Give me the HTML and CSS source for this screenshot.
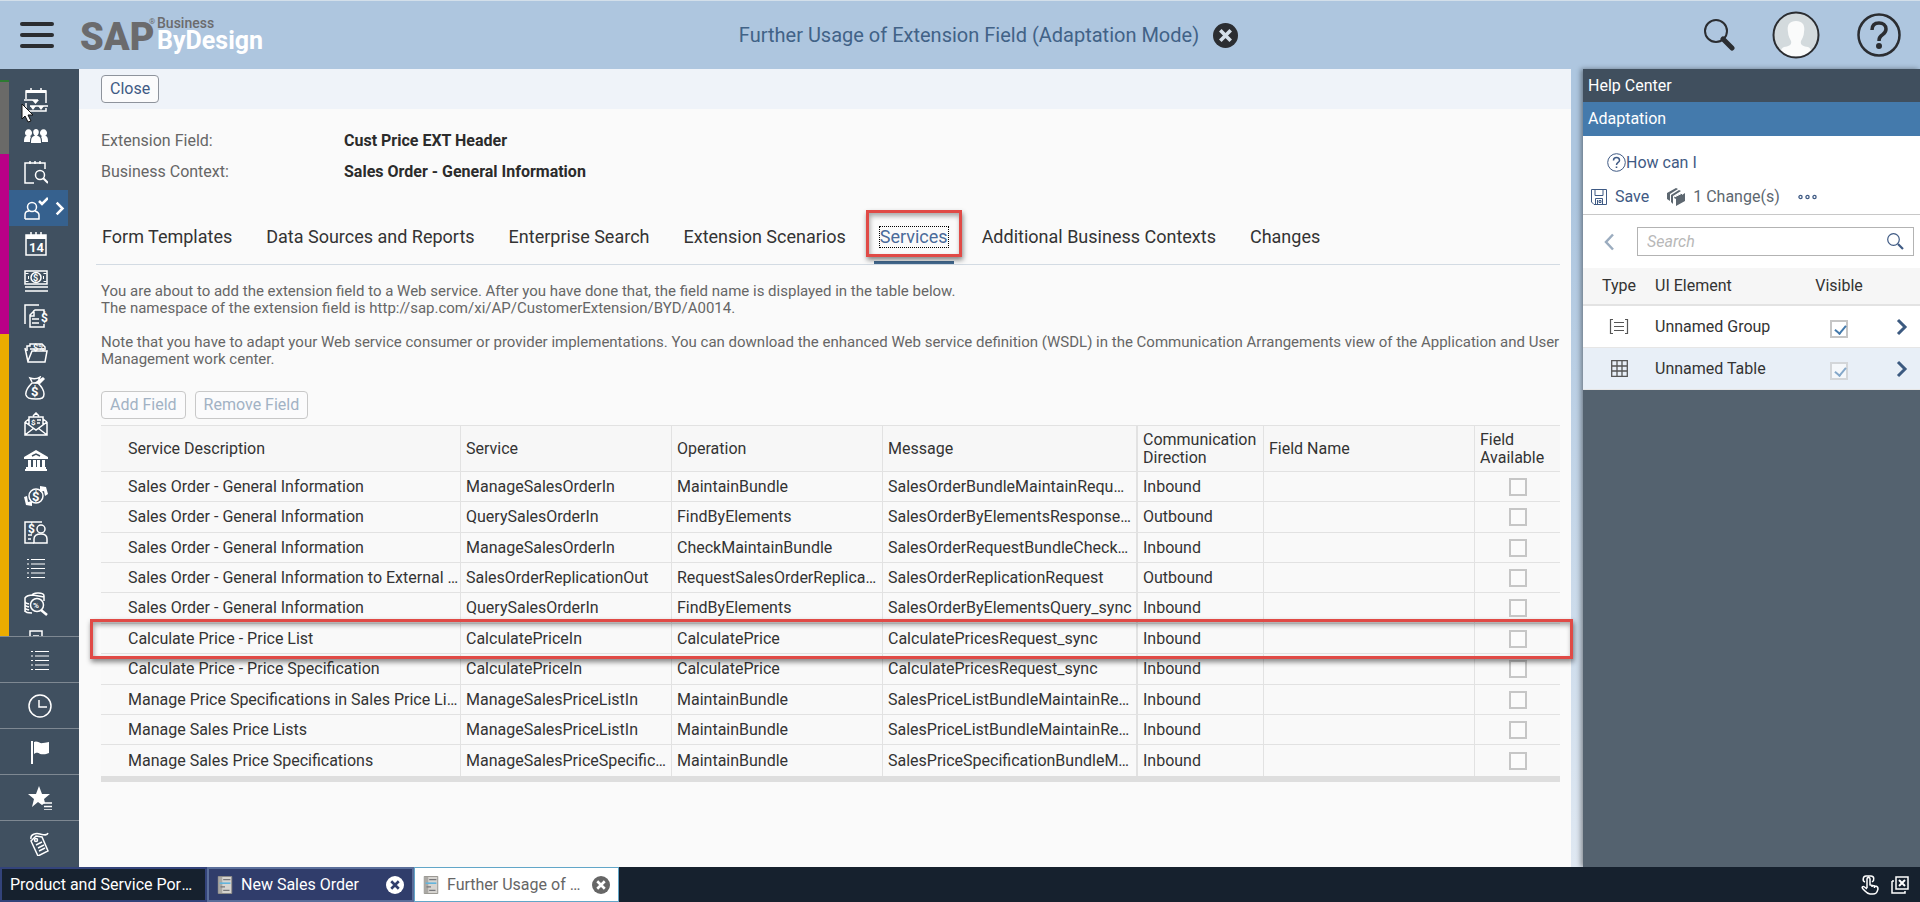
FILE: index.html
```html
<!DOCTYPE html>
<html lang="en">
<head>
<meta charset="utf-8">
<meta name="viewport" content="width=device-width, initial-scale=1">
<title>SAP Business ByDesign</title>
<link rel="stylesheet" href="styles.css">
</head>
<body>
<svg class="defs" aria-hidden="true">
  <symbol id="chevron" viewBox="0 0 12 18"><path d="M2 2l7 7-7 7" fill="none" stroke="currentColor" stroke-width="3"/></symbol>
  <symbol id="list" viewBox="0 0 24 24"><path d="M7 3.500h14M7 8h14M7 12.500h14M7 17h14M7 21.500h14M3 3.500h2M3 8h2M3 12.500h2M3 17h2M3 21.500h2" stroke="currentColor" stroke-width="1.200"/></symbol>
  <symbol id="close" viewBox="0 0 24 24"><circle cx="12" cy="12" r="12" fill="currentColor"/><path d="M7 7l10 10M17 7L7 17" stroke="var(--cross)" stroke-width="3.500"/></symbol>
  <symbol id="sheet" viewBox="0 0 16 20"><path d="M.5.500h15v19H.500z" fill="#d6d4d0" stroke="#8d8b86"/><path d="M1 1h4v18H1z" fill="#aaa8a4"/><path d="M6 4h8M3 12h5M6 16h7" stroke="#77777b" stroke-width="1.500"/><path d="M2 8h12" stroke="#62b4dc" stroke-width="1.800"/></symbol>
</svg>
<div class="app">
  <header class="shell">
    <button class="menu" aria-label="Menu"><span></span><span></span><span></span></button>
    <svg class="logo" width="190" height="50" viewBox="0 0 190 50" role="img" aria-label="SAP Business ByDesign">
      <text class="logo-sap" x="0" y="40">SAP</text>
      <text class="logo-reg" x="69" y="14">®</text>
      <text class="logo-business" x="77" y="18">Business</text>
      <text class="logo-bydesign" x="77" y="39">ByDesign</text>
    </svg>
    <div class="shell-title">
      <h1>Further Usage of Extension Field (Adaptation Mode)</h1>
      <button class="title-close" aria-label="Close page"><svg width="25" height="25"><use href="#close"/></svg></button>
    </div>
    <div class="shell-actions">
      <button aria-label="Search"><svg width="32" height="32" viewBox="0 0 32 32" fill="none" stroke="#2b2d31"><circle cx="13" cy="12" r="11" stroke-width="2"/><path d="M20 20l9 9" stroke-width="5" stroke-linecap="round"/></svg></button>
      <button aria-label="User profile"><svg width="48" height="48" viewBox="0 0 48 48"><circle cx="24" cy="24" r="22.500" fill="#d3dadd"/><path d="M16 21c-1-5 0-11 8-11s9 6 8 11c0 4-2 7-3 9-1 4 2 5 7 6 2 1 3 2 3 4a23 23 0 0 1-30 0c0-2 1-3 3-4 5-1 8-2 7-6-1-2-3-5-3-9z" fill="#fafbfb"/><circle cx="24" cy="24" r="22.500" fill="none" stroke="#2b2d31" stroke-width="2"/></svg></button>
      <button aria-label="Help"><svg width="44" height="44" viewBox="0 0 44 44" fill="none" stroke="#2b2d31"><circle cx="22" cy="22" r="20.500" stroke-width="2.500"/><path d="M15 17c0-5 3-7 7-7s7 2 7 6-3 5-5 7c-2 1.500-2 3-2 5" stroke-width="3.500"/><circle cx="22" cy="33" r="1.500" stroke-width="3"/></svg></button>
    </div>
  </header>

  <nav class="rail" aria-label="Work centers">
    <div class="rail-main">
      <div class="rail-colors"><i class="c-green"></i><i class="c-grey"></i><i class="c-magenta"></i><i class="c-yellow"></i></div>
      <div class="rail-items">
        <button aria-label="Calendar planning"><svg viewBox="0 0 24 24"><path d="M2 11V3h20v12M2 15v8h20v-3M7 0v4M17 0v4"/><path d="M0 12h14M6 18h18"/><path class="f" d="M8 12h7l-3.500 4zM6 18h6l-3 4zM14 18h6l-3 4zM2 2h20v3H2z"/></svg></button>
        <button aria-label="People"><svg viewBox="0 0 24 24"><path class="f" d="M0 18c0-5 1-6 3-6a3.500 3.500 0 1 1 3 0l1 1c-1 1-1 3-1 5zM24 18c0-5-1-6-3-6a3.500 3.500 0 1 0-3 0l-1 1c1 1 1 3 1 5zM7 19c0-5 1-7 4-7-3-3-2-7 1-7s4 4 1 7c3 0 4 2 4 7z"/></svg></button>
        <button aria-label="Calendar search"><svg viewBox="0 0 24 24"><path d="M10 23H1V3h20v6M6 1v3M11 1v3M16 1v3"/><circle cx="16" cy="15" r="4.500"/><path d="M19 18l5 5" stroke-width="2"/></svg></button>
        <button class="active" aria-label="Customer" aria-current="page"><svg viewBox="0 0 24 24"><circle cx="8" cy="11" r="4.500"/><path d="M1 23v-4c0-3 2-4 4-4M11 15c3 1 4 2 4 4v4H1"/><path d="M15 5l3 3 6-6" stroke-width="2.500"/></svg><svg class="rail-chevron" width="10" height="17"><use href="#chevron"/></svg></button>
        <button aria-label="Calendar"><svg viewBox="0 0 24 24"><path d="M2 3h20v20H2zM7 0v5M12 0v5M17 0v5"/><path class="f" d="M2 3h20v4H2z"/><text x="5" y="20" font-size="13">14</text></svg></button>
        <button aria-label="Cash"><svg viewBox="0 0 24 24"><path d="M1 3h22v13H1zM1 19h23M1 23h23"/><circle cx="12" cy="9.500" r="5"/><path d="M3 5v1M21 5v1M3 13v1M21 13v1M4 9.500h1M19 9.500h1" stroke-width="3"/><text x="9" y="13" font-size="9">$</text></svg></button>
        <button aria-label="Invoices"><svg viewBox="0 0 24 24"><path d="M1 20V1h14M20 10V6h-9l-5 5v12h14v-3M10 6v6H6M8 15h7M8 19h7"/><text x="17" y="18" font-size="12">$</text></svg></button>
        <button aria-label="Folder"><svg viewBox="0 0 24 24"><path d="M3 11V6h3v-2h12l3 3v3M1 8l3 14h17l2-11H8l-4 10M6 9h14"/><text x="9" y="11" font-size="9">$%</text></svg></button>
        <button aria-label="Money bag"><svg viewBox="0 0 24 24"><path d="M8 6L6 2c3 1 7 1 10-1l-2 5M8 7c-4 4-7 8-6 12 1 3 3 4 10 4 6 0 8-1 8-5s-3-8-6-11z"/><path class="f" d="M13 5l6-4 2 2-5 5-6-1z"/><text x="7" y="20" font-size="13">$</text></svg></button>
        <button aria-label="Mail"><svg viewBox="0 0 24 24"><path d="M1 10v13h22V10M1 10l4-3M23 10l-4-3M5 13V5h14v8M1 10l11 8 11-8M1 23l9-7M23 23l-9-7M9 4l3-3 3 3"/><text x="7" y="13" font-size="8">$</text><path d="M13 8h4M13 11h3"/></svg></button>
        <button aria-label="Bank"><svg viewBox="0 0 24 24"><path class="f" d="M12 2l12 7v2H0V9zM2 19h20v2H2zM1 21h22v2H1zM4 12h3v7H4zM9 12h3v7H9zM13 12h3v7h-3zM18 12h3v7h-3z"/><path d="M8 8l4-2 4 2" stroke="#405060"/></svg></button>
        <button aria-label="Currency exchange"><svg viewBox="0 0 24 24"><circle cx="12" cy="12" r="7"/><text x="8" y="17" font-size="13">$</text><path class="f" d="M16 2l6 1 2 7-3 2-1-5-4 1zM8 22l-6-1-2-8 3-1 1 6 4-1z"/></svg></button>
        <button aria-label="Account"><svg viewBox="0 0 24 24"><path d="M10 23H1V2h17M4 15h4M4 19h3"/><text x="4" y="13" font-size="12">$</text><circle cx="17" cy="9" r="4"/><path d="M10 23v-4c0-4 3-5 7-5s6 2 6 5v4z"/></svg></button>
        <button aria-label="Lists"><svg viewBox="0 0 24 24"><use href="#list"/></svg></button>
        <button aria-label="Audit"><svg viewBox="0 0 24 24"><path d="M8 4c0-4 12-4 12 0v5M1 9V6c2-3 8-3 8-3l11 2M1 9c0 3 2 2 4 3M1 12c0 3 2 2 4 3M1 15c0 3 2 2 4 3M1 18c0 3 3 3 7 3M1 9v11"/><circle cx="13" cy="13" r="6.500"/><path d="M17 18l6 5" stroke-width="2.500"/><text x="9" y="16" font-size="8">%</text></svg></button>
        <button aria-label="More"><svg viewBox="0 0 24 24"><path d="M6 3h12v18H6zM9 8h6"/></svg></button>
      </div>
    </div>
    <div class="rail-tools">
      <button aria-label="List"><svg viewBox="0 0 24 24"><use href="#list"/></svg></button>
      <button aria-label="Recent"><svg viewBox="0 0 24 24"><circle cx="12" cy="12" r="11"/><path d="M11 6v7h8"/></svg></button>
      <button aria-label="Flag"><svg viewBox="0 0 24 24"><path d="M4 1v23" stroke-width="2"/><path class="f" d="M6 2c3-2 6 2 9 1 3 0 4-1 6-1v11c-4 2-7 1-9 1-3-2-4-1-6 0z"/></svg></button>
      <button aria-label="Favorites"><svg viewBox="0 0 24 24"><path class="f" d="M11 0l3 8h8l-6 5 1 4-3 2-4-3-6 5 2-8-6-5h8z"/><path d="M16 17h8M16 20.500h8M16 24h8"/></svg></button>
      <button aria-label="Tags"><svg viewBox="0 0 24 24"><path d="M3 9l5-5 6 1 6 14-10 5L3 9zM8 13l6-3M10 16l6-3M11 19l6-3M3 7C2 2 8 1 12 2s7 2 8-1"/><circle cx="8" cy="8" r="1.500"/></svg></button>
    </div>
    <svg class="pointer" width="13" height="20" viewBox="0 0 13 20" aria-hidden="true"><path d="M1 1v15l3-3 3 6 3-1-3-6h5z" fill="#fff" stroke="#111"/></svg>
  </nav>

  <main class="work">
    <div class="toolbar"><button class="btn">Close</button></div>
    <div class="content">
      <dl class="facts">
        <dt>Extension Field:</dt><dd>Cust Price EXT Header</dd>
        <dt>Business Context:</dt><dd>Sales Order - General Information</dd>
      </dl>
      <div class="tabs" role="tablist">
        <button role="tab">Form Templates</button>
        <button role="tab">Data Sources and Reports</button>
        <button role="tab">Enterprise Search</button>
        <button role="tab">Extension Scenarios</button>
        <button role="tab" class="selected" aria-selected="true"><span>Services</span></button>
        <button role="tab">Additional Business Contexts</button>
        <button role="tab">Changes</button>
      </div>
      <div class="note">
        <p>You are about to add the extension field to a Web service. After you have done that, the field name is displayed in the table below.<br>The namespace of the extension field is http://sap.com/xi/AP/CustomerExtension/BYD/A0014.</p>
        <p>Note that you have to adapt your Web service consumer or provider implementations. You can download the enhanced Web service definition (WSDL) in the Communication Arrangements view of the Application and User Management work center.</p>
      </div>
      <div class="actions"><button class="btn" disabled>Add Field</button><button class="btn" disabled>Remove Field</button></div>
      <table class="grid">
        <colgroup><col class="w-desc"><col class="w-mid"><col class="w-mid"><col class="w-msg"><col class="w-dir"><col class="w-mid"><col class="w-avail"></colgroup>
        <thead><tr><th>Service Description</th><th>Service</th><th>Operation</th><th>Message</th><th>Communication Direction</th><th>Field Name</th><th>Field Available</th></tr></thead>
        <tbody>
          <tr><td>Sales Order - General Information</td><td>ManageSalesOrderIn</td><td>MaintainBundle</td><td>SalesOrderBundleMaintainRequest_sync</td><td>Inbound</td><td></td><td><input type="checkbox" disabled aria-label="Field available"></td></tr>
          <tr><td>Sales Order - General Information</td><td>QuerySalesOrderIn</td><td>FindByElements</td><td>SalesOrderByElementsResponse_sync</td><td>Outbound</td><td></td><td><input type="checkbox" disabled aria-label="Field available"></td></tr>
          <tr><td>Sales Order - General Information</td><td>ManageSalesOrderIn</td><td>CheckMaintainBundle</td><td>SalesOrderRequestBundleCheckMaintain</td><td>Inbound</td><td></td><td><input type="checkbox" disabled aria-label="Field available"></td></tr>
          <tr><td>Sales Order - General Information to External System</td><td>SalesOrderReplicationOut</td><td>RequestSalesOrderReplication</td><td>SalesOrderReplicationRequest</td><td>Outbound</td><td></td><td><input type="checkbox" disabled aria-label="Field available"></td></tr>
          <tr><td>Sales Order - General Information</td><td>QuerySalesOrderIn</td><td>FindByElements</td><td>SalesOrderByElementsQuery_sync</td><td>Inbound</td><td></td><td><input type="checkbox" disabled aria-label="Field available"></td></tr>
          <tr class="marked"><td>Calculate Price - Price List</td><td>CalculatePriceIn</td><td>CalculatePrice</td><td>CalculatePricesRequest_sync</td><td>Inbound</td><td></td><td><input type="checkbox" disabled aria-label="Field available"></td></tr>
          <tr><td>Calculate Price - Price Specification</td><td>CalculatePriceIn</td><td>CalculatePrice</td><td>CalculatePricesRequest_sync</td><td>Inbound</td><td></td><td><input type="checkbox" disabled aria-label="Field available"></td></tr>
          <tr><td>Manage Price Specifications in Sales Price Lists</td><td>ManageSalesPriceListIn</td><td>MaintainBundle</td><td>SalesPriceListBundleMaintainRequest</td><td>Inbound</td><td></td><td><input type="checkbox" disabled aria-label="Field available"></td></tr>
          <tr><td>Manage Sales Price Lists</td><td>ManageSalesPriceListIn</td><td>MaintainBundle</td><td>SalesPriceListBundleMaintainRequest</td><td>Inbound</td><td></td><td><input type="checkbox" disabled aria-label="Field available"></td></tr>
          <tr><td>Manage Sales Price Specifications</td><td>ManageSalesPriceSpecificationIn</td><td>MaintainBundle</td><td>SalesPriceSpecificationBundleMaintain</td><td>Inbound</td><td></td><td><input type="checkbox" disabled aria-label="Field available"></td></tr>
        </tbody>
      </table>
    </div>
  </main>

  <aside class="panel">
    <h2 class="panel-help">Help Center</h2>
    <h2 class="panel-adapt">Adaptation</h2>
    <div class="panel-tools">
      <button class="howto"><svg width="19" height="19" viewBox="0 0 19 19" fill="none" stroke="currentColor"><circle cx="9.500" cy="9.500" r="8.800"/><path d="M6.500 7.500c0-4 6-4 6 0 0 2-3 2-3 4.500" stroke-width="1.500"/><path d="M9.500 13.500v1.500" stroke-width="1.600"/></svg>How can I</button>
      <div class="panel-row">
        <button class="tool"><svg width="16" height="16" viewBox="0 0 16 16" fill="none" stroke="currentColor"><path d="M.5.500h15v15H3l-2.500-2.500zM4 .500v6h8v-6M4.500 15.500v-6h7v6M6.500 11v4M8 11.500h2v2H8z"/></svg>Save</button>
        <button class="tool changes"><svg width="18" height="18" viewBox="0 0 18 18" fill="currentColor"><path d="M0 5l9-5 2 1-8 5v7l-3-2zM4 7l8-5 2 1-8 5v8l-2-2zM7 9l8-4v2l3-2v8l-9 5V11l-2-1z"/><path d="M7.500 9l9-4.500" stroke="#fff"/></svg>1 Change(s)</button>
        <button class="tool" aria-label="More"><svg width="19" height="6" viewBox="0 0 19 6" fill="none" stroke="currentColor" stroke-width="1.300"><circle cx="2.500" cy="3" r="1.600"/><circle cx="9.500" cy="3" r="1.600"/><circle cx="16.500" cy="3" r="1.600"/></svg></button>
      </div>
    </div>
    <div class="panel-search">
      <button class="back" aria-label="Back"><svg width="12" height="18" viewBox="0 0 12 18"><path d="M10 1.500L3 9l7 7.500" fill="none" stroke="currentColor" stroke-width="2.500"/></svg></button>
      <label class="searchbox"><input type="text" placeholder="Search" aria-label="Search"><svg width="17" height="17" viewBox="0 0 17 17" fill="none" stroke="currentColor"><circle cx="6.500" cy="6.500" r="5.800" stroke-width="1.200"/><path d="M11 11l5 5" stroke-width="2.200"/></svg></label>
    </div>
    <table class="elements">
      <colgroup><col class="e-type"><col><col class="e-vis"><col class="e-go"></colgroup>
      <thead><tr><th>Type</th><th>UI Element</th><th>Visible</th><th></th></tr></thead>
      <tbody>
        <tr><td><svg width="20" height="15" viewBox="0 0 20 15" fill="none" stroke="#555"><path d="M4 .500H1.500v14H4M16 .500h2.500v14H16M5 3.500h10M5 7.500h10M5 11.500h10" stroke-width="1.200"/></svg></td><td>Unnamed Group</td><td><input type="checkbox" checked aria-label="Unnamed Group visible"></td><td><svg width="12" height="18"><use href="#chevron"/></svg></td></tr>
        <tr class="alt"><td><svg width="20" height="17" viewBox="0 0 20 17" fill="none" stroke="#555"><path d="M2.700.700h15.600v15.600H2.700zM8 .500v16M13 .500v16M2.500 6h16M2.500 11h16" stroke-width="1.300"/></svg></td><td>Unnamed Table</td><td><input type="checkbox" checked disabled aria-label="Unnamed Table visible"></td><td><svg width="12" height="18"><use href="#chevron"/></svg></td></tr>
      </tbody>
    </table>
  </aside>

  <footer class="taskbar">
    <div class="task home"><a href="#">Product and Service Portfolio</a></div>
    <div class="task order"><svg width="16" height="18"><use href="#sheet"/></svg><a href="#">New Sales Order</a><button aria-label="Close New Sales Order"><svg width="18" height="18"><use href="#close"/></svg></button></div>
    <div class="task current"><svg width="16" height="18"><use href="#sheet"/></svg><a href="#">Further Usage of Extension Field</a><button aria-label="Close Further Usage"><svg width="18" height="18"><use href="#close"/></svg></button></div>
    <div class="task-tools">
      <button aria-label="Touch mode"><svg width="18" height="20" viewBox="0 0 18 20" fill="none" stroke="#fff" stroke-width="1.500"><path d="M6 13V4c0-2 3-2 3 0v6l5 1c2 0 3 1 3 3-1 4-2 5-5 5H9c-3 0-4-2-7-5-2-2 0-3 1.500-2L6 14M4 7C1 6 2 1 5 1h5c3 0 4 4 1 6M11 10v2M13.500 11v2"/></svg></button>
      <button aria-label="Close all"><svg width="18" height="18" viewBox="0 0 18 18" fill="none" stroke="#fff" stroke-width="1.500"><path d="M5 1h12v12H5zM1 5v12h13v-2M1 5h2"/><path d="M8 4l6 6M14 4l-6 6" stroke-width="2"/></svg></button>
    </div>
  </footer>
</div>
</body>
</html>
```

FILE: styles.css
```css
* { box-sizing: border-box; }
body { margin: 0; font-family: Roboto, "Liberation Sans", sans-serif; font-size: 16px; line-height: 18px; color: #333; }
button { font: inherit; color: inherit; background: none; border: 0; padding: 0; display: inline-flex; align-items: center; }
h1, h2, p, dl, dd { margin: 0; }
svg { flex: none; display: block; }
.defs { position: absolute; width: 0; height: 0; }

.app {
  height: 100vh;
  display: grid;
  grid-template: 69px minmax(0, 1fr) 35px / 79px minmax(0, 1fr) 337px;
  background: linear-gradient(#adc6df 0, #adc6df 200px, #e2eaf3 100%);
}

.shell { grid-column: 1 / -1; display: flex; align-items: center; padding: 0 19px 0 20px; background: #aec6df; border-top: 1px solid #d3dfea; }
.menu { flex-direction: column; gap: 7px; width: 34px; margin-right: 26px; }
.menu span { width: 34px; height: 4px; border-radius: 2px; background: #2b2d31; }
.logo-sap { font-size: 38px; font-weight: 900; fill: #6b6b6d; }
.logo-reg { font-size: 8px; fill: #6b6b6d; }
.logo-business { font-size: 14px; font-weight: 500; fill: #6b6b6d; }
.logo-bydesign { font-size: 25px; font-weight: 700; fill: #fff; }
.shell-title { flex: 1; display: flex; align-items: center; justify-content: center; gap: 14px; padding-left: 4px; }
h1 { font-size: 20px; line-height: 26px; font-weight: 400; color: #416287; }
.title-close { color: #2b2d31; --cross: #d5dfe9; }
.shell-actions { display: flex; align-items: center; gap: 37px; }

.rail { display: flex; flex-direction: column; position: relative; background: #405060; color: #fff; min-height: 0; }
.rail-main { flex: 1; min-height: 0; overflow: hidden; display: flex; padding-top: 11px; }
.rail-colors { width: 9px; display: flex; flex-direction: column; }
.c-green { height: 2px; background: #2d7a32; }
.c-grey { height: 72px; background: #6a6a68; }
.c-magenta { height: 180px; background: #ba0087; }
.c-yellow { flex: 1; background: #ebac00; }
.rail-items { padding-top: 2px; display: flex; flex-direction: column; }
.rail-items button { flex: none; width: 59px; height: 36px; padding-left: 15px; }
.rail-items .active { background: #36618e; }
.rail svg { width: 24px; height: 24px; fill: none; stroke: #fff; stroke-width: 1.5px; }
.rail .f, .rail text { fill: #fff; stroke: none; }
.rail text { font-weight: 700; }
.rail .rail-chevron { width: 10px; height: 17px; margin-left: 7px; }
.rail-tools { padding-bottom: 1px; }
.rail-tools button { display: flex; width: 100%; height: 46px; justify-content: center; border-top: 1px solid #7e8892; }
.rail .pointer { position: absolute; left: 21px; top: 34px; width: 13px; height: 20px; stroke-width: 1px; }

.work { background: #fafafa; margin-right: 12px; min-width: 0; }
.toolbar { height: 40px; padding: 6px 22px; background: #eff3f9; }
.btn { height: 28px; padding: 0 8px; border: 1px solid #8e939c; border-radius: 4px; background: #fbfbfc; color: #3f5a84; }
.btn:disabled { color: #a2b2c4; border-color: #c8c8c8; }
.content { padding: 16px 11px 0 22px; }
.facts { display: grid; grid-template-columns: 243px 1fr; line-height: 31px; }
.facts dt { color: #666; }
.facts dd { font-weight: 700; color: #2b2b2b; }
.tabs { display: flex; gap: 22px; height: 78px; padding-top: 26px; border-bottom: 1px solid #d3dbe3; font-size: 18px; margin-left: -5px; }
.tabs button { padding: 0 6px; white-space: nowrap; border-bottom: 3px solid transparent; }
.tabs .selected { position: relative; color: #4a6a99; border-bottom-color: #436a90; }
.tabs .selected span { outline: 1px dotted #000; line-height: 20px; }
.tabs .selected::after { content: ""; position: absolute; inset: -3px -8px 4px; border: 3px solid #e04a46; box-shadow: 1px 3px 5px #0007, inset 1px 3px 5px #0005; }
.note { display: grid; gap: 17px; padding: 18px 0 23px; font-size: 15px; line-height: 17px; color: #666; }
.actions { display: flex; gap: 9px; margin-bottom: 6px; }

input[type="checkbox"] { appearance: none; display: block; width: 18px; height: 18px; border: 2px solid #c6c6c6; background: #fbfbfb; margin: 0 auto; }
input[type="checkbox"]:checked { background: #fff; }
input[type="checkbox"]:checked::before { content: ""; display: block; width: 5px; height: 9px; margin: 1px 0 0 5px; border: solid #447aac; border-width: 0 2px 2px 0; transform: rotate(40deg); }
input[type="checkbox"]:checked:disabled { opacity: .6; }

table { border-collapse: separate; border-spacing: 0; table-layout: fixed; width: 100%; }
th { font-weight: 400; text-align: left; }
.grid { border-top: 1px solid #e2e2e2; border-bottom: 6px solid #dedede; background: #f9f9f9; }
.grid th, .grid td { padding: 0 4px 0 5px; border-right: 1px solid #e2e2e2; border-bottom: 1px solid #e2e2e2; overflow: hidden; }
.grid th { height: 46px; background: #f7f7f7; }
.grid td { height: 30px; white-space: nowrap; text-overflow: ellipsis; }
.grid tr:nth-child(5n) td, .grid tr:nth-child(5n+2) td { height: 31px; }
.grid tr > :first-child { padding-left: 27px; padding-right: 0; }
.grid tr > :nth-child(4) { border-right-width: 2px; }
.grid tr > :last-child { border-right: 0; }
.grid td:last-child { padding: 0; }
.grid tbody tr:last-child td { border-bottom: 0; }
.w-mid { width: 211px; }
.w-msg { width: 255px; }
.w-dir { width: 126px; }
.w-avail { width: 85px; }
.marked { position: relative; }
.marked td:first-child::after { content: ""; position: absolute; inset: -5px -13px -5px -11px; border: 3px solid #e04a46; box-shadow: 1px 3px 5px #0007, inset 1px 3px 5px #0005; }

.panel { background: #54626f; box-shadow: -2px 0 5px #0006; color: #333; }
.panel h2 { font-size: 16px; font-weight: 400; color: #fff; padding: 0 5px; line-height: 34px; }
.panel .panel-help { background: #404f5e; line-height: 33px; }
.panel-adapt { background: #447aac; }
.panel-tools { background: #fff; padding: 17px 8px 8px; border-bottom: 1px solid #c8c8c8; color: #3f5a84; }
.howto { display: flex; margin-left: 16px; }
.panel-row { display: flex; align-items: center; gap: 18px; margin-top: 16px; }
.tool { gap: 8px; }
.changes { color: #5d6770; }
.panel-search { display: flex; align-items: center; gap: 22px; padding: 12px 6px 12px 20px; background: #fff; }
.back { color: #9bacbf; }
.searchbox { flex: 1; height: 29px; display: flex; align-items: center; padding: 0 9px; border: 1px solid #b3b3b3; color: #3f5a84; }
.searchbox input { flex: 1; min-width: 0; border: 0; outline: 0; padding: 0; font: inherit; background: none; }
.searchbox input::placeholder { color: #b8b8b8; font-style: italic; }
.elements th { height: 38px; padding: 0; background: #f6f6f6; border-bottom: 2px solid #e3e3e3; }
.elements td { height: 42px; padding: 0; background: #fff; border-bottom: 1px solid #e6e6e6; }
.elements .alt td { background: #e8eff7; }
.elements tr > :nth-child(1) { padding-left: 19px; }
.elements td:nth-child(1) { padding-left: 26px; }
.elements tr > :nth-child(3) { text-align: center; }
.elements td:nth-child(3) { padding-top: 5px; }
.elements td:last-child { color: #3c5a80; }
.e-type { width: 72px; }
.e-vis { width: 74px; }
.e-go { width: 44px; }
.elements td:last-child svg { margin-left: 20px; }

.taskbar { grid-column: 1 / -1; display: flex; background: #16212e; color: #fff; }
.task { width: 207px; display: flex; align-items: center; gap: 8px; padding: 0 8px; border: 2px solid #33437a; }
.task a { flex: 1; min-width: 0; color: inherit; text-decoration: none; white-space: nowrap; overflow: hidden; text-overflow: ellipsis; }
.order { background: #303d6b; border-color: #5a6e9a; --cross: #303d6b; }
.current { width: 205px; background: #fff; border: 1px solid #62a6c8; color: #666; --cross: #fff; }
.task-tools { margin-left: auto; display: flex; gap: 12px; padding-right: 11px; }
```
